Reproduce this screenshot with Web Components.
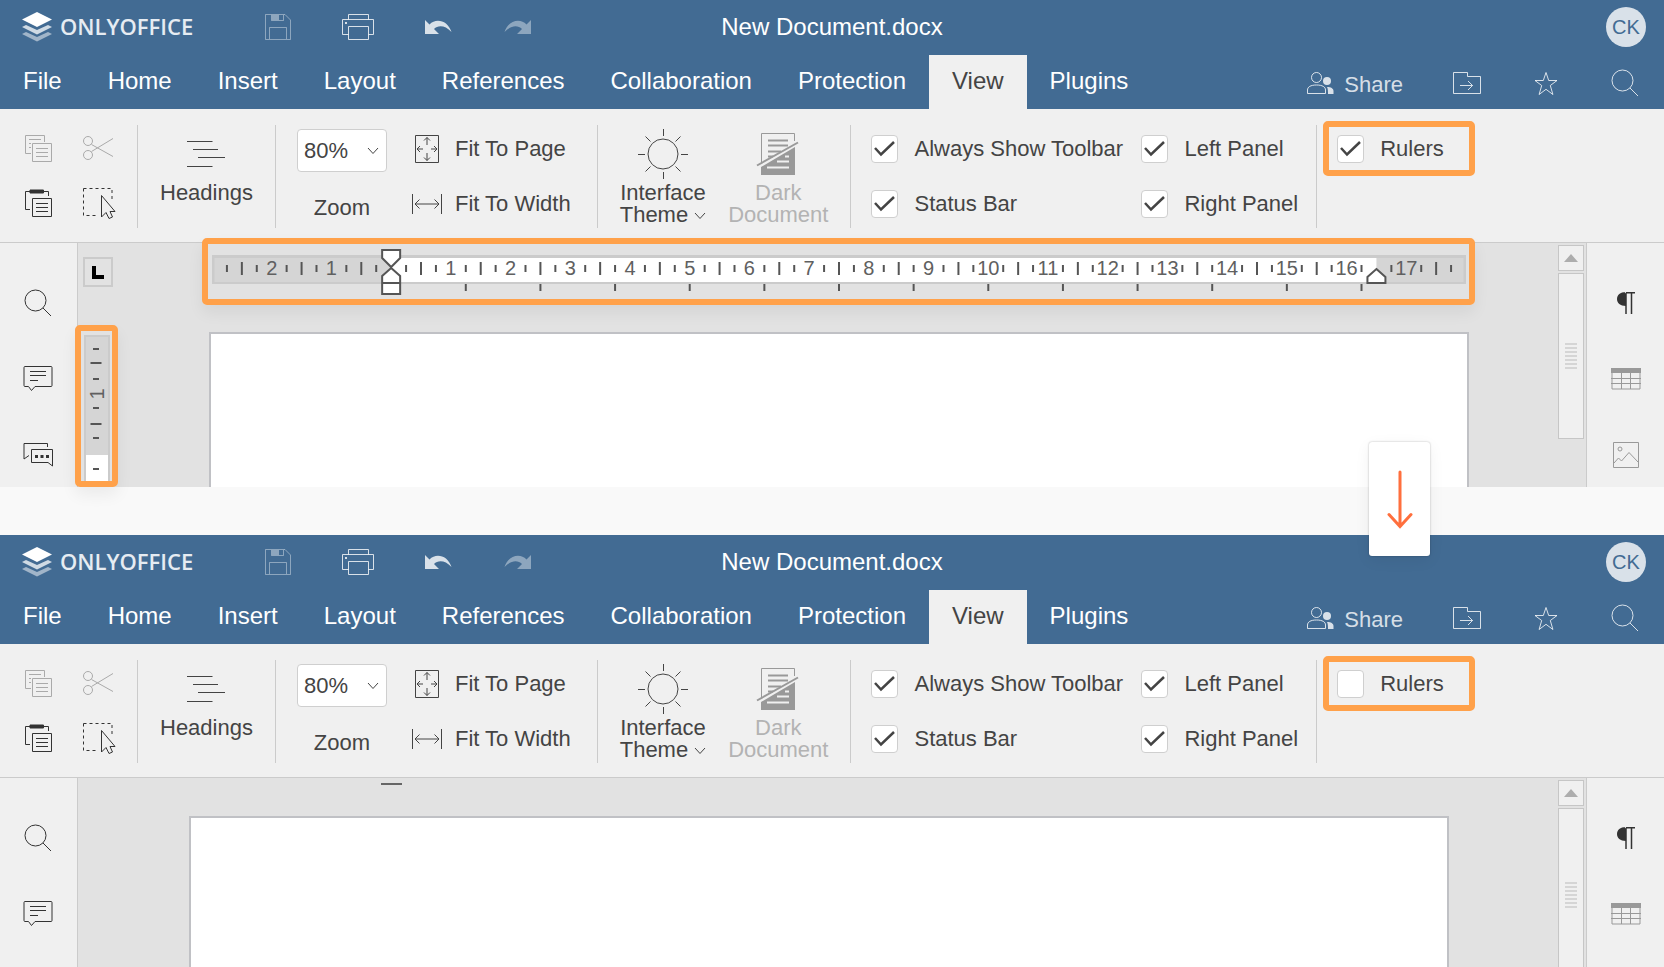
<!DOCTYPE html>
<html lang="en">
<head>
<meta charset="utf-8">
<meta name="viewport" content="width=device-width, initial-scale=1">
<title>ONLYOFFICE – Rulers option</title>
<style>
  html, body { margin: 0; height: 100%; }
  body { background: #f9f9f9; font-family: "Liberation Sans", Arial, sans-serif; color: #444; overflow: hidden; }
</style>
</head>
<body>
<before-after>
  <doc-editor slot="before" rulers></doc-editor>
  <doc-editor slot="after"></doc-editor>
</before-after>

<script>
const ICONS = {
  logo: [30, 30, `<g fill="#fff" stroke="none"><path d="M15 0 30 7.500 15 15 0 7.500z"/><path opacity=".75" d="M0 15l4-2 11 5 11-5 4 2-15 7.500z"/><path opacity=".5" d="M0 22l4-2 11 5 11-5 4 2-15 7.500z"/></g>`],
  save: [26, 26, `<path d="M.5.5H20L25.500 6V25.500H.5z"/><path d="M6.500 1V6.500H18.500V1M4.500 25V13.500H21.500V25"/><path d="M7 1h7v5H7z" fill="currentColor" stroke="none"/>`],
  print: [32, 26, `<path d="M6.500 5.500V.5H26.500V5.500M6.500 20.500H.5V5.500H31.500V20.500H26.500"/><path d="M6.500 12.500H26.500V25.500H6.500z"/><path d="M3 8h2v2H3z" fill="currentColor" stroke="none"/>`],
  undo: [28, 16, `<path d="M1 1v14h14L10 10C14 6 21 6 27.500 13 24 1.500 12-1.500 5.500 5.500z" fill="currentColor" stroke="none"/>`],
  redo: [28, 16, `<path d="M27 1v14H13l5-5C14 6 7 6 .5 13 4 1.500 16-1.500 22.500 5.500z" fill="currentColor" stroke="none"/>`],
  share: [27, 23, `<circle cx="9.500" cy="5.500" r="5"/><path d="M.5 21.500V18c0-3 3-5 9-5s9 2 9 5v3.500z"/><circle cx="20" cy="9" r="4" fill="currentColor" stroke="none"/><path d="M20 15c4 0 6.500 1.500 6.500 4V22H21c0-3 0-5-1-7z" fill="currentColor" stroke="none"/>`],
  folder: [28, 22, `<path d="M.5.5H14.500V4.500H27.500V21.500H.5zM7 13.500H19.500M15 9l4.500 4.500L15 18"/>`],
  star: [24, 25, `<path d="M12 1.500 14.700 9.500H23L16.300 14.500 18.900 23.500 12 18.300 5.100 23.500 7.700 14.500 1 9.500H9.300z"/>`],
  find: [28, 28, `<circle cx="11.500" cy="11.500" r="10.500"/><path d="M19 19l8 8"/>`],
  copy: [28, 28, `<path d="M7 19.500H1.500V1.500H20.500V8M5 5.500H17M5 9.500H7M5 13.500H7"/><path d="M8.500 9.500H27.500V27.500H8.500zM12 14.500H24M12 18.500H24M12 22.500H24"/>`],
  cut: [32, 26, `<circle cx="6" cy="6" r="4.500"/><circle cx="6" cy="20" r="4.500"/><path d="M9.500 9.500 31 21.500M9.500 16.500 31 3.500"/>`],
  paste: [28, 28, `<path d="M6 20.500H1.500V2.500H24.500V7"/><path d="M6 1H19.500V4H6z" fill="currentColor"/><path d="M8.500 9.500H27.500V27.500H8.500zM12 14.500H24M12 18.500H24M12 22.500H24"/>`],
  select: [34, 32, `<path d="M1.500 1.500H30V12M1.500 1.500V28.500H16" stroke-dasharray="3 3"/><path d="M19.500 8.500V30L24 25.500 27 31.500 30.500 30 28 24.500H33z" fill="#f0f0f0"/>`],
  headings: [38, 28, `<path d="M0 1.500H25.500M6 9.500H31M11 17.500H38M0 26.500H25.500"/>`],
  fitpage: [24, 28, `<path d="M.5.5H23.500V27.500H.5z"/><path d="M12 2.500V10M9 5.500l3-3 3 3M12 18v7.500M9 22.500l3 3 3-3M2 14h6M5 11l-3 3 3 3M16 14h6M19 11l3 3-3 3"/>`],
  fitwidth: [32, 22, `<path d="M1.500 1V21M30.500 1V21M4 11H28M8.500 6.500L4 11l4.500 4.500M23.500 6.500 28 11l-4.500 4.500"/>`],
  theme: [50, 50, `<circle cx="25" cy="25" r="15"/><path d="M25.500 0V7M25.500 43V50M0 25.500H7M43 25.500H50M7.500 7.500l5 5M42.500 7.500l-5 5M7.500 42.500l5-5M42.500 42.500l-5-5"/>`],
  dark: [42, 44, `<path d="M37.500 9V1.500H4.500V31"/><path d="M4 35 38 15V43H4z" fill="currentColor" stroke="none"/><path d="M11 8.500H31M11 13.500H31M11 19.500H24M11 24.500H16" stroke-width="2"/><path d="M0 33.500 41 10.500" stroke-width="2"/><path d="M28 24.500H32M20 29.500H32M10 35.500H32" stroke="#f0f0f0" stroke-width="2"/>`],
  chevron: [12, 8, `<path d="M1 1l5 5.500L11 1"/>`],
  tick: [27, 27, `<path d="M4 13l6 6.500L23 7" stroke-width="2.500"/>`],
  comment: [30, 26, `<path d="M2 .5H28a1 1 0 0 1 1 1V19.500a1 1 0 0 1-1 1H12L8.500 24.500 5.500 20.500H2a1 1 0 0 1-1-1V1.500a1 1 0 0 1 1-1z"/><path d="M7 5.500H23M7 9.500H23M7 14.500H15"/>`],
  chat: [30, 26, `<path d="M24.500 5V1.500H1V17L6 13.500"/><path d="M8.500 7.500H29.500V24L25 20.500H8.500z"/><path d="M12 13h3v3h-3zM17.500 13h3v3h-3zM23 13h3v3h-3z" fill="currentColor" stroke="none"/>`],
  para: [18, 22, `<path d="M8 0H18V1.500H8zM9 0C3 0 0 3 0 7s3 7 9 7z" fill="currentColor" stroke="none"/><path d="M9 1V22M14.500 1V22" stroke-width="1.500"/>`],
  table: [30, 22, `<path d="M0 0H30V5H0z" fill="currentColor" stroke="none"/><path d="M1 1V21H29V1M0 10.500H30M0 15.500H30M10.500 5V21M19.500 5V21"/>`],
  image: [28, 28, `<path d="M1.500 1.500H26.500V26.500H1.500z"/><circle cx="8" cy="8" r="2"/><path d="M2 22l4.500-5 3 3 7.500-8.500L26 21"/>`],
  down: [26, 58, `<path d="M13 2V55M2 44.500 13 56.500 24 44.500" stroke-width="3" stroke-linecap="round"/>`],
  up: [14, 8, `<path d="M7 0l7 8H0z" fill="currentColor" stroke="none"/>`],
};

/* Attaches an open shadow root holding the given styles and markup. */
const render = (host, css, html) => {
  const t = document.createElement('template');
  t.innerHTML = `<style>*{box-sizing:border-box}button,select,input{font:inherit;color:inherit;margin:0;padding:0;border:0;background:none}${css}</style>${html}`;
  host.attachShadow({ mode: 'open' }).append(t.content.cloneNode(true));
};

customElements.define('ui-icon', class extends HTMLElement {
  connectedCallback() {
    if (this.shadowRoot) return;
    const [w, h, body] = ICONS[this.getAttribute('name')];
    render(this, `:host{display:inline-flex;flex:none} svg{display:block;overflow:visible}`,
      `<svg width="${w}" height="${h}" viewBox="0 0 ${w} ${h}" fill="none" stroke="currentColor" aria-hidden="true">${body}</svg>`);
  }
});

/* Orange annotation frame laid over the control or area it wraps. */
customElements.define('high-light', class extends HTMLElement {
  connectedCallback() {
    if (this.shadowRoot) return;
    render(this, `
      :host{display:block;position:relative}
      i{position:absolute;inset:var(--frame, 0);border:6px solid #ffa14a;border-radius:5px;
        box-shadow:0 8px 16px rgba(0,0,0,var(--frame-shadow, .06));pointer-events:none;z-index:2}`,
      `<slot></slot><i></i>`);
  }
});

customElements.define('editor-header', class extends HTMLElement {
  connectedCallback() {
    if (this.shadowRoot) return;
    const tabs = ['File', 'Home', 'Insert', 'Layout', 'References', 'Collaboration', 'Protection', 'View', 'Plugins'];
    render(this, `
      :host{display:block;background:#426b93;color:#fff;font-size:24px}
      .top{display:grid;grid-template-columns:1fr auto 1fr;align-items:center;height:55px;padding-bottom:2px}
      .left{display:flex;align-items:center;padding-left:22px}
      .brand{display:flex;align-items:center;gap:8px;width:216px;font:600 22px/28px "Open Sans",sans-serif;color:#e6ecf2}
      .brand span{padding-bottom:2px}
      .quick{display:flex;color:rgba(255,255,255,.8)}
      .quick button,.actions button.ic{width:80px;height:32px;display:grid;place-items:center}
      .quick button:disabled{color:rgba(255,255,255,.4)}
      h1{margin:0;font-size:24px;line-height:28px;font-weight:400}
      .avatar{justify-self:end;margin-right:18px;width:40px;height:40px;border-radius:50%;background:#d9e1e9;color:#426b93;font-size:20px;line-height:40px;text-align:center}
      .bar{display:flex;justify-content:space-between;height:54px}
      nav{display:flex;padding-left:1px}
      nav button{padding:0 23px 2px;white-space:nowrap}
      nav button:first-child{padding-left:22px}
      nav button[aria-selected=true]{background:#f0f0f0;color:#444}
      .actions{display:flex;align-items:center;color:rgba(255,255,255,.8);padding-top:2px}
      .actions button.ic{width:79px}
      .share{display:flex;align-items:center;gap:10px;font-size:22px;line-height:28px;margin-right:24px}
      .share span{padding-top:3px}`,
      `<div class="top">
        <div class="left">
          <div class="brand"><ui-icon name="logo"></ui-icon><span>ONLYOFFICE</span></div>
          <div class="quick">
            <button aria-label="Save" disabled><ui-icon name="save"></ui-icon></button>
            <button aria-label="Print"><ui-icon name="print"></ui-icon></button>
            <button aria-label="Undo"><ui-icon name="undo"></ui-icon></button>
            <button aria-label="Redo" disabled><ui-icon name="redo"></ui-icon></button>
          </div>
        </div>
        <h1>New Document.docx</h1>
        <button class="avatar">CK</button>
      </div>
      <div class="bar">
        <nav role="tablist">${tabs.map(t => `<button role="tab" aria-selected="${t === 'View'}">${t}</button>`).join('')}</nav>
        <div class="actions">
          <button class="share"><ui-icon name="share"></ui-icon><span>Share</span></button>
          <button class="ic" aria-label="Open file location"><ui-icon name="folder"></ui-icon></button>
          <button class="ic" aria-label="Favorite"><ui-icon name="star"></ui-icon></button>
          <button class="ic" aria-label="Search"><ui-icon name="find"></ui-icon></button>
        </div>
      </div>`);
  }
});

customElements.define('tool-check', class extends HTMLElement {
  connectedCallback() {
    if (this.shadowRoot) return;
    render(this, `
      :host{display:block}
      label{display:flex;align-items:center;gap:16px;white-space:nowrap;height:32px}
      span.box{display:grid}
      input{appearance:none;grid-area:1/1;width:27px;height:28px;background:#fff;border:1px solid #cfcfcf;border-radius:4px}
      ui-icon{grid-area:1/1;visibility:hidden;pointer-events:none}
      input:checked + ui-icon{visibility:visible}`,
      `<label><span class="box"><input type="checkbox" ${this.hasAttribute('checked') ? 'checked' : ''}><ui-icon name="tick"></ui-icon></span><slot></slot></label>`);
  }
});

customElements.define('view-toolbar', class extends HTMLElement {
  connectedCallback() {
    if (this.shadowRoot) return;
    const rulers = this.hasAttribute('rulers') ? 'checked' : '';
    render(this, `
      :host{display:flex;background:#f0f0f0;border-bottom:1px solid #cbcbcb;padding:16px 0 14px;height:134px;font-size:22px;line-height:22px;color:#444}
      .group{display:flex;height:103px;flex:none}
      .group + .group{border-left:1px solid #cbcbcb}
      .pairs{display:grid;grid-auto-rows:32px;row-gap:23px;padding-top:8px;align-content:start}
      .clip{grid-template-columns:32px 32px;column-gap:28px;padding-inline:22px 23px;padding-top:7px}
      .clip button{display:grid;place-items:center;color:#333}
      button:disabled,.clip button:disabled{color:#aaa}
      .big{display:flex;flex-direction:column;align-items:center}
      .big .pic{height:57px;display:flex;align-items:center}
      .big .pic + span{white-space:nowrap}
      .headings{padding:0 22px}
      .zoom{display:flex;flex-direction:column;align-items:center;padding:4px 24px 0 21px}
      .sel{display:grid;align-items:center}
      .sel select{appearance:none;grid-area:1/1;width:90px;height:43px;background:#fff;border:1px solid #cfcfcf;border-radius:4px;padding:0 0 0 6px}
      .sel ui-icon{grid-area:1/1;justify-self:end;margin-right:8px;pointer-events:none}
      .zoom label{margin-top:25px}
      .fit button{display:flex;align-items:center;gap:12px;white-space:nowrap}
      .fit button ui-icon{width:32px;justify-content:center}
      .fit{padding-right:26px}
      .looks{padding:0 22px;gap:22px}
      .looks .dis{color:#b3b3b3}
      .looks .dis ui-icon{color:#999}
      .looks ui-icon[name=chevron]{margin-left:6px;vertical-align:middle}
      .opts{grid-template-columns:270px auto;padding-inline:20px 18px}
      .last{padding-left:20px}
      high-light{--frame:-12px -31px -11px -14px;--frame-shadow:0}`,
      `<div class="group pairs clip">
        <button disabled aria-label="Copy"><ui-icon name="copy"></ui-icon></button>
        <button disabled aria-label="Cut"><ui-icon name="cut"></ui-icon></button>
        <button aria-label="Paste"><ui-icon name="paste"></ui-icon></button>
        <button aria-label="Select all"><ui-icon name="select"></ui-icon></button>
      </div>
      <div class="group headings"><button class="big"><span class="pic"><ui-icon name="headings"></ui-icon></span><span>Headings</span></button></div>
      <div class="group">
        <div class="zoom"><span class="sel"><select id="zoom"><option>80%</option></select><ui-icon name="chevron"></ui-icon></span><label for="zoom">Zoom</label></div>
        <div class="pairs fit">
          <button><ui-icon name="fitpage"></ui-icon><span>Fit To Page</span></button>
          <button><ui-icon name="fitwidth"></ui-icon><span>Fit To Width</span></button>
        </div>
      </div>
      <div class="group looks">
        <button class="big"><span class="pic"><ui-icon name="theme"></ui-icon></span><span>Interface<br>Theme<ui-icon name="chevron"></ui-icon></span></button>
        <button class="big dis" disabled><span class="pic"><ui-icon name="dark"></ui-icon></span><span>Dark<br>Document</span></button>
      </div>
      <div class="group pairs opts">
        <tool-check checked>Always Show Toolbar</tool-check><tool-check checked>Left Panel</tool-check>
        <tool-check checked>Status Bar</tool-check><tool-check checked>Right Panel</tool-check>
      </div>
      <div class="group pairs last"><high-light><tool-check ${rulers}>Rulers</tool-check></high-light></div>`);
  }
});

customElements.define('side-rail', class extends HTMLElement {
  connectedCallback() {
    if (this.shadowRoot) return;
    const items = this.getAttribute('items').split(' ');
    const off = (this.getAttribute('off') || '').split(' ');
    render(this, `
      :host{display:block;width:78px;flex:none;contain:size;background:#f0f0f0;padding-top:22px;overflow:hidden;color:#333;border:0 solid #cbcbcb}
      button{display:grid;place-items:center;width:100%;height:76px}
      button:disabled{color:#999}`,
      items.map(i => `<button aria-label="${i}" ${off.includes(i) ? 'disabled' : ''}><ui-icon name="${i}"></ui-icon></button>`).join(''));
  }
});

/* Horizontal ruler: three units of left margin, then up to eighteen units of page. */
customElements.define('h-ruler', class extends HTMLElement {
  connectedCallback() {
    if (this.shadowRoot) return;
    const first = -3, last = 18, span = last - first;
    const at = u => ((u - first) / span * 100).toFixed(3) + '%';
    let marks = '';
    for (let q = first * 4 + 1; q < last * 4; q++) {
      const u = q / 4;
      if (u === 0 || u === 16.5) continue;
      if (q % 4 === 0) marks += `<text x="${at(u)}" y="20">${Math.abs(u)}</text>`;
      else if (q % 2 === 0) marks += `<line x1="${at(u)}" x2="${at(u)}" y1="7" y2="20"/>`;
      else marks += `<line x1="${at(u)}" x2="${at(u)}" y1="10" y2="17"/>`;
    }
    for (let n = 1; n <= 13; n++) marks += `<line x1="${at(n * 1.25)}" x2="${at(n * 1.25)}" y1="29" y2="36"/>`;
    render(this, `
      :host{display:block;height:29px}
      svg{display:block;overflow:visible}
      line{stroke:#555;stroke-width:2}
      text{font-size:20px;fill:#606060;text-anchor:middle}
      .m{fill:#fff;stroke:#555;stroke-width:2}`,
      `<svg width="100%" height="29"><rect width="100%" height="29" fill="#cbcbcb"/>
        <rect x="0.2%" y="3" width="99.6%" height="24" fill="#d5d5d5"/>
        <rect x="${at(0)}" y="3" width="78.571%" height="24" fill="#fff"/>${marks}
        <svg class="m" x="${at(0)}" overflow="visible"><path d="M-9-5H9V3L0 12-9 3zM0 13 9 21V28H-9V21zM-9 28H9V39H-9z"/></svg>
        <svg class="m" x="${at(16.5)}" overflow="visible"><path d="M0 14 9 22V28H-9V22z"/></svg>
      </svg>`);
  }
});

customElements.define('v-ruler', class extends HTMLElement {
  connectedCallback() {
    if (this.shadowRoot) return;
    const row = (y, w) => `<path d="M${10 - w / 2} ${y}h${w}"/>`;
    render(this, `
      :host{display:block;width:26px;height:100%;background:#d5d5d5;border:2px solid #cbcbcb;border-bottom:0;overflow:hidden}
      svg{display:block;overflow:visible} path{stroke:#555;stroke-width:2}
      text{font-size:20px;fill:#606060;text-anchor:middle}`,
      `<svg width="22" height="140"><rect y="118" width="22" height="34" fill="#fff"/>
        ${row(12, 6)}${row(26, 11)}${row(42, 6)}${row(71, 6)}${row(87, 11)}${row(101, 6)}${row(132, 6)}
        <text transform="translate(18 57) rotate(-90)">1</text></svg>`);
  }
});

customElements.define('scroll-bar', class extends HTMLElement {
  connectedCallback() {
    if (this.shadowRoot) return;
    render(this, `
      :host{display:flex;flex-direction:column;gap:2px;width:28px;flex:none;contain:size;padding:2px 2px 0 0;overflow:hidden}
      button,div{background:#f0f0f0;border:1px solid #c6c6c6;display:grid;place-content:center;flex:none}
      button{height:26px;color:#adadad}
      div{height:var(--thumb, 166px);gap:2px}
      i{width:12px;height:2px;background:#d5d5d5}`,
      `<button aria-label="Scroll up"><ui-icon name="up"></ui-icon></button><div>${'<i></i>'.repeat(7)}</div>`);
  }
});

customElements.define('doc-canvas', class extends HTMLElement {
  connectedCallback() {
    if (this.shadowRoot) return;
    const rulers = this.hasAttribute('rulers');
    render(this, `
      :host{display:grid;flex:1;min-width:0;background:#e2e2e2;
        grid-template:${rulers ? '89px 1fr / 131px 1fr 89px' : '38px 1fr / 111px 1fr 109px'}}
      .paper{grid-area:2/2;background:#fff;border:2px solid #c0c1c5;border-bottom:0}
      .corner{width:30px;height:30px;margin:14px 0 0 5px;border:2px solid #cbcbcb;display:grid;place-items:center}
      .corner i{width:12px;height:13px;border:solid #000;border-width:0 0 4px 4px}
      .h{margin:12px 3px 0;height:29px;--frame:-17px -9px -21px -10px}
      .v{grid-area:2/1;margin:3px 0 0 6px;width:26px;--frame:-10px -8px 0 -9px}
      .stub{grid-area:1/1/2/4;width:21px;height:2px;margin:5px 0 0 303px;background:#666}`,
      rulers
        ? `<button class="corner" aria-label="Tab type"><i></i></button><high-light class="h"><h-ruler></h-ruler></high-light>
           <high-light class="v"><v-ruler></v-ruler></high-light><div class="paper"></div>`
        : `<div class="stub"></div><div class="paper"></div>`);
  }
});

customElements.define('doc-editor', class extends HTMLElement {
  connectedCallback() {
    if (this.shadowRoot) return;
    const r = this.hasAttribute('rulers') ? 'rulers' : '';
    render(this, `
      :host{display:flex;flex-direction:column}
      main{display:flex;flex:1;min-height:${r ? 244 : 180}px}
      .l{border-right-width:1px;padding-right:1px}
      .r{border-left-width:1px}
      scroll-bar{background:#e2e2e2;--thumb:${r ? 166 : 173}px}`,
      `<editor-header></editor-header><view-toolbar ${r}></view-toolbar>
      <main>
        <side-rail class="l" items="find comment${r ? ' chat' : ''}"></side-rail>
        <doc-canvas ${r}></doc-canvas><scroll-bar></scroll-bar>
        <side-rail class="r" items="para table${r ? ' image' : ''}" off="table image"></side-rail>
      </main>`);
  }
});

/* Stacks the two editor states, with an arrow card bridging the gap between them. */
customElements.define('before-after', class extends HTMLElement {
  connectedCallback() {
    if (this.shadowRoot) return;
    render(this, `
      :host{display:grid;grid-template-rows:auto 48px 1fr;height:100vh;overflow:hidden}
      .gap{position:relative;z-index:3}
      .card{position:absolute;right:234px;top:-45px;width:61px;height:114px;background:#fff;border-radius:3px;color:#ff6f3d;
        display:grid;place-items:center;box-shadow:0 0 2px rgba(0,0,0,.3),0 4px 16px rgba(0,0,0,.06)}`,
      `<slot name="before"></slot><div class="gap"><div class="card"><ui-icon name="down"></ui-icon></div></div><slot name="after"></slot>`);
  }
});
</script>
</body>
</html>
